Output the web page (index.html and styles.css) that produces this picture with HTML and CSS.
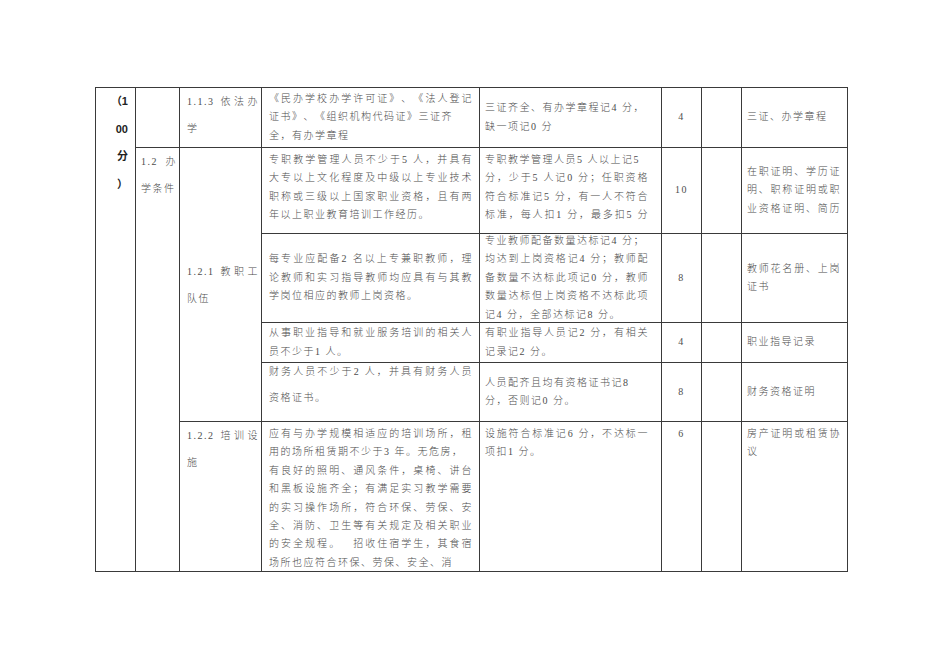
FILE: index.html
```html
<!DOCTYPE html>
<html lang="zh-CN">
<head>
<meta charset="utf-8">
<title>办学条件评估表</title>
<link rel="stylesheet" href="styles.css">
</head>
<body>
<div class="sheet">
  <div class="tbl">
    <!-- column 1 -->
    <div class="cell c1 span6"><span class="l">（1</span><span class="l">00</span><span class="l">分</span><span class="l">）</span></div>

    <!-- row 1 -->
    <div class="cell c2"></div>
    <div class="cell c3 top"><span class="l f">1.1.3 依法办</span><span class="l">学</span></div>
    <div class="cell c4"><span class="l f">《民办学校办学许可证》、《法人登记</span><span class="l">证书》、《组织机构代码证》三证齐</span><span class="l">全，有办学章程</span></div>
    <div class="cell c5"><span class="l">三证齐全、有办学章程记4 分，</span><span class="l">缺一项记0 分</span></div>
    <div class="cell c6">4</div>
    <div class="cell c7"></div>
    <div class="cell c8"><span class="l">三证、办学章程</span></div>

    <!-- row 2 -->
    <div class="cell c2 span5 top"><span class="l f">1.2 办</span><span class="l">学条件</span></div>
    <div class="cell c3 span4"><span class="l f">1.2.1 教职工</span><span class="l">队伍</span></div>
    <div class="cell c4 top"><span class="l f">专职教学管理人员不少于5 人，并具有</span><span class="l f">大专以上文化程度及中级以上专业技术</span><span class="l f">职称或三级以上国家职业资格，且有两</span><span class="l">年以上职业教育培训工作经历。</span></div>
    <div class="cell c5 top"><span class="l">专职教学管理人员5 人以上记5</span><span class="l f">分，少于5 人记0 分；任职资格</span><span class="l f">符合标准记5 分，有一人不符合</span><span class="l f">标准，每人扣1 分，最多扣5 分</span></div>
    <div class="cell c6">10</div>
    <div class="cell c7"></div>
    <div class="cell c8"><span class="l f">在职证明、学历证</span><span class="l f">明、职称证明或职</span><span class="l f">业资格证明、简历</span></div>

    <!-- row 3 -->
    <div class="cell c4"><span class="l f">每专业应配备2 名以上专兼职教师，理</span><span class="l f">论教师和实习指导教师均应具有与其教</span><span class="l">学岗位相应的教师上岗资格。</span></div>
    <div class="cell c5"><span class="l">专业教师配备数量达标记4 分；</span><span class="l f">均达到上岗资格记4 分；教师配</span><span class="l f">备数量不达标此项记0 分，教师</span><span class="l f">数量达标但上岗资格不达标此项</span><span class="l">记4 分，全部达标记8 分。</span></div>
    <div class="cell c6">8</div>
    <div class="cell c7"></div>
    <div class="cell c8"><span class="l f">教师花名册、上岗</span><span class="l">证书</span></div>

    <!-- row 4 -->
    <div class="cell c4"><span class="l f">从事职业指导和就业服务培训的相关人</span><span class="l">员不少于1 人。</span></div>
    <div class="cell c5"><span class="l f">有职业指导人员记2 分，有相关</span><span class="l">记录记2 分。</span></div>
    <div class="cell c6">4</div>
    <div class="cell c7"></div>
    <div class="cell c8"><span class="l">职业指导记录</span></div>

    <!-- row 5 -->
    <div class="cell c4 wide"><span class="l f">财务人员不少于2 人，并具有财务人员</span><span class="l">资格证书。</span></div>
    <div class="cell c5"><span class="l">人员配齐且均有资格证书记8</span><span class="l">分，否则记0 分。</span></div>
    <div class="cell c6">8</div>
    <div class="cell c7"></div>
    <div class="cell c8"><span class="l">财务资格证明</span></div>

    <!-- row 6 -->
    <div class="cell c3 top"><span class="l f">1.2.2 培训设</span><span class="l">施</span></div>
    <div class="cell c4 top"><span class="l f">应有与办学规模相适应的培训场所，租</span><span class="l">用的场所租赁期不少于3 年。无危房，</span><span class="l f">有良好的照明、通风条件，桌椅、讲台</span><span class="l f">和黑板设施齐全；有满足实习教学需要</span><span class="l f">的实习操作场所，符合环保、劳保、安</span><span class="l f">全、消防、卫生等有关规定及相关职业</span><span class="l f">的安全规程。　招收住宿学生，其食宿</span><span class="l">场所也应符合环保、劳保、安全、消</span></div>
    <div class="cell c5 top"><span class="l f">设施符合标准记6 分，不达标一</span><span class="l">项扣1 分。</span></div>
    <div class="cell c6 top">6</div>
    <div class="cell c7"></div>
    <div class="cell c8 top"><span class="l f">房产证明或租赁协</span><span class="l">议</span></div>
  </div>
</div>
</body>
</html>
```

FILE: styles.css
```css
html, body {
  margin: 0;
  padding: 0;
  background: #ffffff;
}

.sheet {
  padding: 87px 0 0 95px;
}

.tbl {
  display: grid;
  grid-template-columns: 39px 43px 81px 217px 181px 39px 39px 105px;
  grid-template-rows: 59px 85px 88px 39px 58px 149px;
  gap: 1px;
  padding: 1px;
  width: max-content;
  background: #3a3a3a;
  font-family: "Liberation Serif", "Noto Sans CJK SC", serif;
  font-size: 10px;
  font-weight: 300;
  line-height: 18.4px;
  letter-spacing: 1.5px;
  text-spacing-trim: space-all;
  color: #4d4d4d;
}

.cell {
  background: #ffffff;
  display: flex;
  flex-direction: column;
  justify-content: center;
  overflow: visible;
  min-width: 0;
}

.cell.top {
  justify-content: flex-start;
  padding-top: 3px;
}

.l {
  display: block;
  white-space: nowrap;
}

.f {
  text-align: justify;
  text-align-last: justify;
}

.span6 { grid-row: span 6; }
.span5 { grid-row: span 5; }
.span4 { grid-row: span 4; }

.c1 {
  justify-content: flex-start;
  text-align: right;
  padding: 0 7px 0 0;
  font-family: "Liberation Sans", "Noto Sans CJK SC", sans-serif;
  font-weight: bold;
  font-size: 11px;
  line-height: 27.5px;
  letter-spacing: 0;
  color: #222222;
}

.c2 {
  padding: 0 2px 0 5px;
  line-height: 27px;
}
.c2.top { padding-top: 0; }

.c3 {
  padding: 0 2px 0 7px;
  line-height: 27px;
}
.c3.top { padding-top: 0; }

.c4 {
  padding: 0 6px 0 7px;
}

.c4.wide {
  justify-content: flex-start;
  line-height: 26px;
}
.c4.wide .l:first-child {
  margin-top: -4px;
}

.c5 {
  padding: 0 12px 0 5px;
}

.c6 {
  text-align: center;
  align-items: center;
  padding: 0;
}

.c8 {
  padding: 0 6px 0 5px;
}
```
